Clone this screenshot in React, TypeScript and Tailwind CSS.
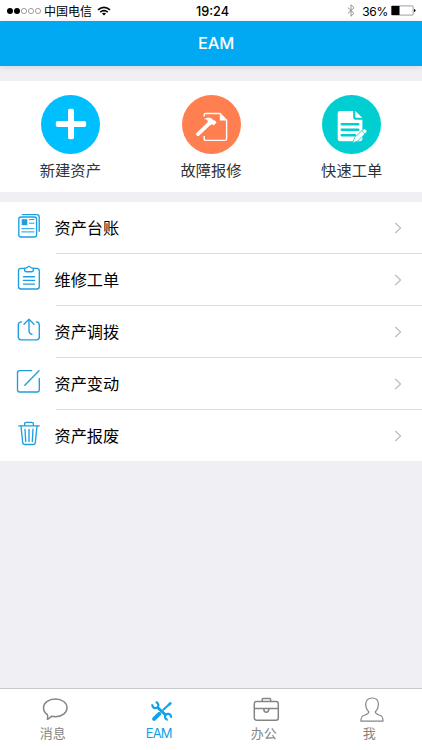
import type { ReactNode } from "react"

const PlusIcon = () => (
  <svg width="59" height="59" viewBox="0 0 59 59" fill="#fff">
    <rect x="14.8" y="26.1" width="30.4" height="6" rx="1.8" />
    <rect x="27" y="13.8" width="6" height="30.4" rx="1.8" />
  </svg>
)

const RepairIcon = () => (
  <svg width="59" height="59" viewBox="0 0 59 59" fill="none" stroke="#fff" strokeWidth="1.4">
    <path d="M22.2 21.500V20q0-1.500 1.500-1.500h14.300l6.600 6.800v18.500q0 1.600-1.600 1.600H23.700q-1.500 0-1.500-1.500V41" />
    <path d="M37.800 18.300v7.300h7.300z" fill="#fff" stroke="none" />
    <path d="M16 39.200 27.500 28.200" strokeWidth="3.800" strokeLinecap="round" />
    <path d="M21.800 24.100Q25.500 21.400 29.300 23.300L31.700 25.400 32.700 25.300 34.500 27.400 31.600 30.500 30 29.100 28.600 30.400 25.400 27.200 26 26.100Q24.500 24.300 21.800 24.100z" fill="#fff" stroke="none" />
  </svg>
)

const QuickOrderIcon = () => (
  <svg width="59" height="59" viewBox="0 0 59 59" fill="none">
    <path d="M18 16h13.200v6.600q0 2.200 2.200 2.200h7v18.800q0 2.700-2.700 2.700H18.200q-2.500 0-2.500-2.500V18.300q0-2.300 2.300-2.300z" fill="#fff" />
    <path d="M33.300 16l7 6.700h-5.500q-1.500 0-1.500-1.500z" fill="#fff" />
    <path d="M19.800 29.200h16.400M19.800 34.800h16.400M19.800 40.300h13" stroke="#00ced1" strokeWidth="2.6" strokeLinecap="round" />
    <path d="M30.800 48l1.800-5.500 7.800-7.200 1.200-1.200q1-.8 2 .1l1 1q.9 1-.1 2L35.800 46z" fill="#fff" stroke="#00ced1" strokeWidth="0.8" />
    <path d="M39.500 35.600l3.800 3.800" stroke="#00ced1" strokeWidth="0.7" />
  </svg>
)

const LineIcon = ({ children }: { children: ReactNode }) => (
  <svg
    className="shrink-0"
    width="26"
    height="30"
    viewBox="0 0 26 30"
    fill="none"
    stroke="#1c9fe0"
    strokeWidth="1.35"
    strokeLinecap="round"
    strokeLinejoin="round"
  >
    {children}
  </svg>
)

const Tab = ({ label, active, children }: { label: string; active?: boolean; children: ReactNode }) => (
  <button className={`flex flex-1 flex-col items-center pt-[7px] ${active ? "text-[#10a2e8]" : "text-[#858585]"}`}>
    <svg
      className="ml-[5px]"
      width="28"
      height="28"
      viewBox="0 0 28 28"
      fill="none"
      stroke="currentColor"
      strokeWidth="1.5"
      strokeLinejoin="round"
    >
      {children}
    </svg>
    <span className={`text-[13px] leading-[18px] ${active ? "pl-[1px] tracking-[-0.8px]" : ""}`}>{label}</span>
  </button>
)

const actions = [
  { label: "新建资产", color: "bg-[#00bfff]", icon: <PlusIcon /> },
  { label: "故障报修", color: "bg-[#ff7f50]", icon: <RepairIcon /> },
  { label: "快速工单", color: "bg-[#00ced1]", icon: <QuickOrderIcon /> },
]

const menus = [
  {
    label: "资产台账",
    icon: (
      <>
        <rect x="2.8" y="4" width="17.8" height="20" rx="2.2" />
        <path d="M6.5 1.6h14.3q2.4 0 2.4 2.4v14.2" />
        <rect x="5.7" y="6.2" width="5.6" height="6" fill="#1c9fe0" stroke="none" />
        <path d="M13.3 6.6h4.7M13.3 10.2h4.7M5.7 15.7H18M5.7 18.9H18" strokeWidth="1" />
      </>
    ),
  },
  {
    label: "维修工单",
    icon: (
      <>
        <path d="M8.6 3.3H5q-2.500 0-2.500 2.500v15.700Q2.500 24 5 24h15.800q2.500 0 2.500-2.500V5.800q0-2.500-2.500-2.500h-3.400" />
        <path d="M8.600 3.300 11 2.700q1.900-2.600 4 0l2.400.6v1.400q0 2-2 2h-4.800q-2 0-2-2z" />
        <path d="M7.500 11.700h11M7.500 15.400h11M7.500 19.100h11" />
      </>
    ),
  },
  {
    label: "资产调拨",
    icon: (
      <>
        <path d="M5.600 4.800Q2.300 4.800 2.300 8v12q0 2.800 2.800 2.800h15.400q2.800 0 2.800-2.800V8q0-3.200-3-3.200" />
        <path d="M8 7.200l5-5.100 5 5.100M13 2.200v11.500q0 3 3 3.700" />
      </>
    ),
  },
  {
    label: "资产变动",
    icon: (
      <>
        <path d="M15.700 1.600h-12q-2.200 0-2.200 2.200v17q0 2.200 2.200 2.200h17.400q2.200 0 2.200-2.200V9.400" />
        <path d="M8.800 16.200 23 1.700" />
      </>
    ),
  },
  {
    label: "资产报废",
    icon: (
      <>
        <path d="M2.800 4.900h20.400M8.600 4.700V3q0-1.600 1.600-1.600h5.600q1.600 0 1.600 1.600v1.700" />
        <path d="M5 5.200l1.700 16.300q.2 2 2.200 2h8.200q2 0 2.200-2L21 5.200" />
        <path d="M9 8.300l.7 12.200M13 8.300v12.200M17 8.300l-.7 12.200" />
      </>
    ),
  },
]

const StatusBar = () => (
  <div className="flex h-[21px] shrink-0 items-center bg-white pl-[7px] pr-[6px] text-[12px] text-black">
    <div className="flex flex-1 items-center">
      <svg width="36" height="8" viewBox="0 0 36 8" fill="none" stroke="#777" strokeWidth="0.7">
        <circle cx="3" cy="4" r="3" fill="#000" stroke="none" />
        <circle cx="10" cy="4" r="3" fill="#000" stroke="none" />
        <circle cx="17" cy="4" r="2.6" />
        <circle cx="24" cy="4" r="2.6" />
        <circle cx="31" cy="4" r="2.6" />
      </svg>
      <span className="ml-[1px] pt-[2px]">中国电信</span>
      <svg className="ml-[5px]" width="14" height="10" viewBox="0 0 14 10" fill="none" stroke="#000" strokeWidth="1.6">
        <path d="M1 3.9q6-5.200 12 0M3.200 6.200q3.800-3.200 7.600 0" />
        <path d="M7 9.600 5 7.500q2-1.500 4 0z" fill="#000" stroke="none" />
      </svg>
    </div>
    <span className="pl-[2px] pt-[2px] text-[12.7px] font-medium">19:24</span>
    <div className="flex flex-1 items-center justify-end">
      <svg className="mr-[7px]" width="8" height="13" viewBox="0 0 8 13" fill="none" stroke="#888" strokeWidth="0.9">
        <path d="M.8 3.500 7 9.300 4 12.200V.8l3 2.900L.8 9.500" />
      </svg>
      <span className="mr-[3px] pt-[2px] tracking-[-0.3px]">36%</span>
      <svg width="25" height="11" viewBox="0 0 25 11">
        <rect x="0.4" y="0.9" width="21.8" height="9.2" rx="1" fill="none" stroke="#777" strokeWidth="0.7" />
        <rect x="0.5" y="1" width="8" height="9" fill="#000" />
        <path d="M23 3.900q1.500.3 1.500 1.600T23 7.100z" fill="#000" />
      </svg>
    </div>
  </div>
)

const App = () => {
  return (
    <div className="flex h-[750px] w-[422px] flex-col overflow-hidden bg-[#efeff4] font-['Inter','Noto_Sans_CJK_SC',sans-serif]">
      <StatusBar />

      {/* Header */}
      <header className="flex h-[45px] shrink-0 items-center justify-center bg-[#00a9f2] pl-[10px] shadow-[0_1px_6px_rgba(0,0,0,0.12)]">
        <h1 className="text-[16.5px] font-medium tracking-[-0.2px] text-white">EAM</h1>
      </header>

      {/* Quick actions */}
      <section className="mt-[15px] flex h-[111px] shrink-0 bg-white pt-[14px]">
        {actions.map((item) => (
          <button key={item.label} className="flex flex-1 flex-col items-center">
            <span className={`size-[59px] rounded-full ${item.color}`}>{item.icon}</span>
            <span className="mt-[5px] text-[15.3px] leading-[24px] text-[#333]">{item.label}</span>
          </button>
        ))}
      </section>

      {/* Menu list */}
      <ul className="mt-[10px] shrink-0 bg-white">
        {menus.map((item) => (
          <li key={item.label} className="group flex h-[52px] pl-[16px] last:h-[51px]">
            <div className="pt-[11px]">
              <LineIcon>{item.icon}</LineIcon>
            </div>
            <div className="ml-[14px] flex flex-1 items-center justify-between border-b border-[#dedee0] pr-[20px] group-last:border-b-0">
              <span className="-ml-[1.5px] pt-[2px] text-[16.2px] text-black">{item.label}</span>
              <svg width="8" height="12" viewBox="0 0 8 12" fill="none" stroke="#b8b8bc" strokeWidth="1.1">
                <path d="M1.3 1 6.600 6l-5.300 5" />
              </svg>
            </div>
          </li>
        ))}
      </ul>

      {/* Tab bar */}
      <nav className="mt-auto flex h-[62px] shrink-0 border-t border-[#c8c8cc] bg-white">
        <Tab label="消息">
          <path d="M14.300 3c6.800 0 11.700 3.800 11.700 8.800s-4.900 8.900-11.700 8.900c-1.400 0-2.700-.2-3.900-.4-1.200 1.500-2 2.300-4 3 .4-1 .4-2.700 0-4.600C3.900 17 2.500 14.600 2.500 11.800 2.500 6.800 7.500 3 14.300 3z" />
        </Tab>
        <Tab label="EAM" active>
          <path d="M5.500 8.300A3 3 0 1 0 8.700 6.200M23.900 21.700A3 3 0 1 0 20.700 23.800" strokeWidth="2.2" />
          <path d="M10.300 11.300 19 19.300" strokeWidth="2.9" />
          <path d="M15.800 14.200 21.500 8.900" strokeWidth="2" />
          <path d="M20.400 8.300 23.300 5.800 24.900 7.300 22.500 10.200z" fill="currentColor" stroke="none" />
          <path d="M7.100 22.900 12.300 17.900" strokeWidth="4" strokeLinecap="round" />
        </Tab>
        <Tab label="办公">
          <rect x="2.300" y="5.600" width="24" height="18.600" rx="2.200" />
          <path d="M10.200 5.500V3.600q0-1 1-1h6.400q1 0 1 1v1.900M2.300 12.500h24M11.700 12.600q.2 3.600 2.600 3.600t2.600-3.600" />
        </Tab>
        <Tab label="我">
          <path d="M14.100 2c3.800 0 6.300 2.400 6.300 6.100 0 3.500-1.200 6-3.200 7.900.4 2.100 2.500 2.500 4.700 3.300 2.700.9 3.100 2.200 3.100 5.800H2.900c0-3.600.5-4.900 3.300-5.800 2.200-.8 4.300-1.200 4.700-3.300-2-1.900-3.200-4.400-3.200-7.900C7.700 4.400 10.300 2 14.100 2z" strokeWidth="1.2" />
        </Tab>
      </nav>
    </div>
  )
}

export default App
